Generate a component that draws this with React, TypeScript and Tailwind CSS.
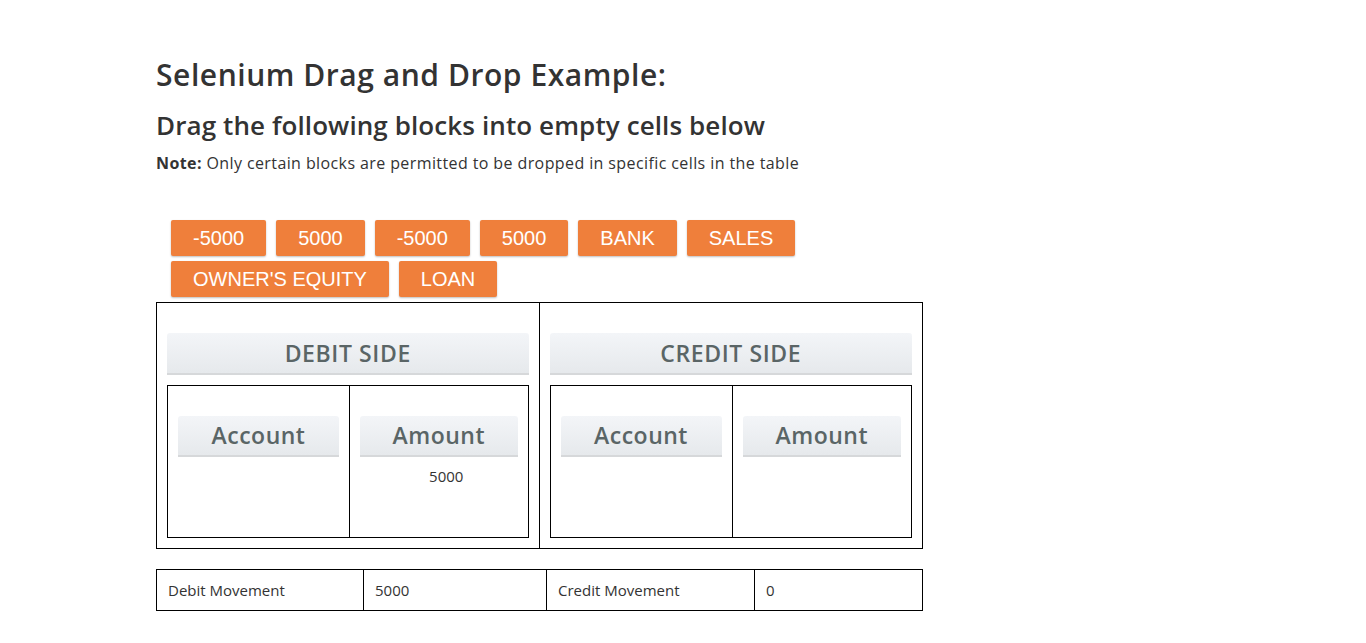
const blocks = ["-5000", "5000", "-5000", "5000", "BANK", "SALES", "OWNER'S EQUITY", "LOAN"]

function Block({ label }: { label: string }) {
  return (
    <div className="h-[36px] px-[22px] flex items-center rounded-[2px] bg-[#ef7f3b] text-white text-[20px] font-['Liberation_Sans',Arial,sans-serif] shadow-[0_1px_2px_rgba(0,0,0,0.25)]">
      {label}
    </div>
  )
}

function GrayHead({ label, className }: { label: string; className?: string }) {
  return (
    <div
      className={
        "flex items-center justify-center rounded-t-[3px] bg-gradient-to-b from-[#f3f5f8] to-[#e6e9ec] border-b-2 border-[#d6d8da] text-[#5a6566] font-semibold " +
        (className ?? "")
      }
    >
      {label}
    </div>
  )
}

function Side({ title, amount }: { title: string; amount?: string }) {
  return (
    <div className="pt-[30px] pb-[10px] px-[10px]">
      <GrayHead label={title} className="h-[42px] text-[23px] tracking-[0.6px]" />
      <div className="mt-[10px] border border-black grid grid-cols-[182px_1fr] h-[153px]">
        <div className="border-r border-black px-[10px] pt-[30px]">
          <GrayHead label="Account" className="h-[41px] text-[23px] tracking-[0.5px]" />
        </div>
        <div className="px-[10px] pt-[30px]">
          <GrayHead label="Amount" className="h-[41px] text-[23px] tracking-[0.5px]" />
          {amount && (
            <div className="text-center text-[15px] text-[#333] mt-[8px] pl-[15px]">{amount}</div>
          )}
        </div>
      </div>
    </div>
  )
}

export default function App() {
  return (
    <div className="min-h-[643px] bg-white font-['Open_Sans',sans-serif] text-[#333]">
      <div className="ml-[156px] w-[767px] pt-[54px]">
        <h1 className="text-[30px] tracking-[0.55px] font-semibold leading-[42px]">Selenium Drag and Drop Example:</h1>
        <h2 className="text-[26px] tracking-[0.1px] font-semibold leading-[34px] mt-[12px]">
          Drag the following blocks into empty cells below
        </h2>
        <p className="text-[16px] tracking-[0.4px] leading-[22px] mt-[10px]">
          <span className="font-bold">Note:</span> Only certain blocks are permitted to be dropped in specific
          cells in the table
        </p>

        <div className="mt-[46px] pl-[15px] flex flex-wrap gap-x-[10px] gap-y-[5px] w-[660px]">
          {blocks.map((b, i) => (
            <Block key={i} label={b} />
          ))}
        </div>

        <div className="mt-[5px] border border-black grid grid-cols-2">
          <div className="border-r border-black">
            <Side title="DEBIT SIDE" amount="5000" />
          </div>
          <Side title="CREDIT SIDE" />
        </div>

        <div className="mt-[20px] border border-black grid grid-cols-[207px_183px_208px_1fr] h-[42px] text-[15px] text-[#333]">
          <div className="border-r border-black flex items-center pl-[11px]">Debit Movement</div>
          <div className="border-r border-black flex items-center pl-[11px]">5000</div>
          <div className="border-r border-black flex items-center pl-[11px]">Credit Movement</div>
          <div className="flex items-center pl-[11px]">0</div>
        </div>
      </div>
    </div>
  )
}
